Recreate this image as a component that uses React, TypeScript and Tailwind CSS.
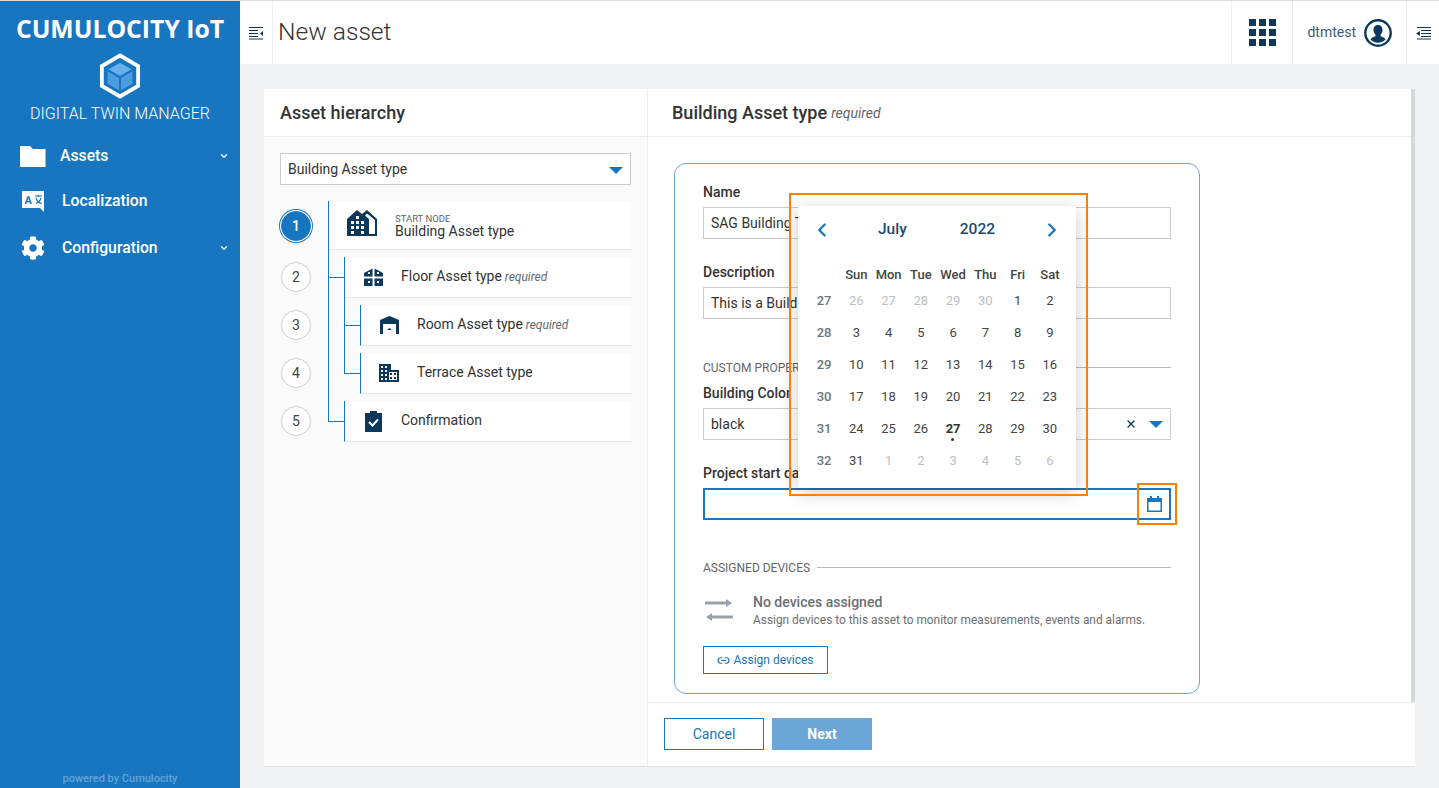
import * as React from 'react'
import { ChevronDown, ChevronLeft, ChevronRight, Link2, X } from 'lucide-react'
import { FaCog } from 'react-icons/fa'

const NAVY = '#0b385b'

const MenuIcon = () => (
  <svg width="15" height="14" viewBox="0 0 15 14">
    <path d="M0 1.500h14M0 4.500h9M0 7.500h9M0 10.500h9M0 13h14" stroke={NAVY} strokeWidth="1" fill="none" />
    <path d="M14 5v5l-3-2.500z" fill={NAVY} />
  </svg>
)

const MenuRightIcon = () => (
  <svg width="15" height="14" viewBox="0 0 15 14">
    <path d="M1 1.500h14M5 4.500h10M5 7.500h10M5 10.500h10M1 13h14" stroke={NAVY} strokeWidth="1" fill="none" />
    <path d="M4 5v5L0 7.500z" fill={NAVY} />
  </svg>
)

const LogoIcon = () => (
  <svg width="42" height="46" viewBox="0 0 44 48">
    <path d="M22 2.500 41 13.500V34.500L22 45.500 3 34.500V13.500z" fill="none" stroke="#fff" strokeWidth="4" />
    <path d="M22 10 34 17 22 24 10 17z" fill="#64aeea" />
    <path d="M9 19 21 26V39L9 32z" fill="#4c9ce0" />
    <path d="M35 19 23 26V39L35 32z" fill="#4c9ce0" />
  </svg>
)

const FolderIcon = () => (
  <svg width="26" height="21" viewBox="0 0 26 21">
    <path d="M0 0h10l3 3h12.500v18H0z" fill="#fff" />
  </svg>
)

const LocalizationIcon = () => (
  <svg width="24" height="23" viewBox="0 0 24 23">
    <path d="M1 1h22v21l-4-4H1z" fill="#fff" />
    <text x="3.500" y="14" fontSize="11" fontWeight="700" fill="#1776bf" fontFamily="Roboto, sans-serif">A</text>
    <path d="M14 6h7M17.500 5v2M15 8c1 3 3 5 6 5.500M20 8c-.6 2.600-2.500 4.400-5 5.500" stroke="#1776bf" strokeWidth="1.200" fill="none" />
  </svg>
)

const BuildingIcon = () => (
  <svg width="31" height="27" viewBox="0 0 31 27" className="mb-[6px]">
    <path d="M0 27V10L10 1l5 4 5-4 10 9v17z" fill={NAVY} />
    <path d="M20 4.500 28 11v14h-6V10l-4-3.500z" fill="#fff" />
    <path d="M24 13h2v2h-2zM24 18h2v2h-2zM4 12h3v3H4zM9 12h3v3H9zM14 12h3v3h-3zM9 7h3v3H9zM4 17h3v3H4zM9 17h3v3H9zM14 17h3v3h-3zM4 22h3v3H4zM14 22h3v3h-3z" fill="#fff" />
  </svg>
)

const FloorIcon = () => (
  <svg width="19" height="18" viewBox="0 0 19 18">
    <path d="M0 18V5l9.500-5L19 5v13z" fill={NAVY} />
    <path d="M8.500 0h2v18h-2zM0 8.500h19v2H0zM4 4h2v2H4zM13 4h2v2h-2zM4 13h2v2H4zM13 13h2v2h-2z" fill="#fff" />
  </svg>
)

const RoomIcon = () => (
  <svg width="19" height="18" viewBox="0 0 19 18">
    <path d="M0 18V4l9.500-4L19 4v14h-3V8H3v10z" fill={NAVY} />
    <path d="M7 14l2.500-2 2.500 2z" fill={NAVY} />
  </svg>
)

const TerraceIcon = () => (
  <svg width="20" height="18" viewBox="0 0 20 18">
    <path d="M0 0h12v6h8v12H0z" fill={NAVY} />
    <path d="M2 2h2v2H2zM6 2h2v2H6zM2 6h2v2H2zM6 6h2v2H6zM2 10h2v2H2zM6 10h2v2H6zM2 14h2v2H2zM6 14h2v2H6zM10 8h8v8h-8z" fill="#fff" />
    <path d="M11 9h2v2h-2zM15 9h2v2h-2zM11 13h2v2h-2zM15 13h2v2h-2z" fill={NAVY} />
  </svg>
)

const ClipboardIcon = () => (
  <svg width="17" height="21" viewBox="0 0 17 21">
    <path d="M0 2h5V0h7v2h5v19H0z" fill={NAVY} />
    <path d="M4 11l3.500 3.500L13 8.500" stroke="#fff" strokeWidth="2" fill="none" />
  </svg>
)

const GridIcon = () => (
  <svg width="27" height="27" viewBox="0 0 27 27" fill={NAVY}>
    <path d="M0 0h7v7H0zM10 0h7v7h-7zM20 0h7v7h-7zM0 10h7v7H0zM10 10h7v7h-7zM20 10h7v7h-7zM0 20h7v7H0zM10 20h7v7h-7zM20 20h7v7h-7z" />
  </svg>
)

const UserIcon = () => (
  <svg width="28" height="28" viewBox="0 0 28 28">
    <circle cx="14" cy="14" r="12.700" fill="none" stroke={NAVY} strokeWidth="2.400" />
    <path d="M14 6c3 0 4.500 2.300 4.500 5 0 2-.8 3.700-2 4.800v1.500c2 .8 4 1.500 5 3.200A10.500 10.500 0 0 1 6.500 20.500c1-1.700 3-2.400 5-3.200v-1.500c-1.200-1.100-2-2.800-2-4.800 0-2.700 1.500-5 4.500-5z" fill={NAVY} />
  </svg>
)

const CalendarIcon = () => (
  <svg width="15" height="16" viewBox="0 0 15 16">
    <path d="M0 2h3V0h2v2h5V0h2v2h3v14H0z" fill="#1776bf" />
    <path d="M1.500 6h12v8.500h-12z" fill="#fff" />
  </svg>
)

const TransferIcon = () => (
  <svg width="30" height="26" viewBox="0 0 30 26" fill="#9aa3ab">
    <path d="M1 3.500h21V1l6 4-6 4V6.500H1zM29 17.500H8V15l-6 4 6 4v-2.500h21z" />
  </svg>
)

const NavItem = ({
  icon,
  label,
  textLeft,
  iconLeft,
  chevron,
  className,
}: {
  icon: React.ReactNode
  label: string
  textLeft: string
  iconLeft: string
  chevron?: boolean
  className?: string
}) => (
  <div className={`flex h-[24px] items-center text-[15.750px] font-medium text-white ${className ?? ''}`}>
    <div className={iconLeft}>{icon}</div>
    <span className={textLeft}>{label}</span>
    {chevron && <ChevronDown size={10} strokeWidth={3} className="ml-auto mr-[11px]" />}
  </div>
)

const Sidebar = () => (
  <aside className="flex h-full w-[240px] shrink-0 flex-col bg-[#1776bf] text-white">
    <div className="mt-[11px] text-center font-['Open_Sans',sans-serif] text-[24.750px] leading-[34px] font-bold whitespace-nowrap">
      CUMULOCITY IoT
    </div>
    <div className="mt-[7px] flex justify-center">
      <LogoIcon />
    </div>
    <div className="mt-[5px] text-center text-[16px] leading-[20px] font-light">DIGITAL TWIN MANAGER</div>
    <NavItem
      className="mt-[20px]"
      icon={<FolderIcon />}
      iconLeft="ml-[20px] flex"
      label="Assets"
      textLeft="ml-[14px]"
      chevron
    />
    <NavItem
      className="mt-[21px]"
      icon={<LocalizationIcon />}
      iconLeft="ml-[21px] flex"
      label="Localization"
      textLeft="ml-[17px]"
    />
    <NavItem
      className="mt-[23px]"
      icon={<FaCog size={24} />}
      iconLeft="ml-[21px] flex"
      label="Configuration"
      textLeft="ml-[17px]"
      chevron
    />
    <div className="mt-auto mb-[2px] text-center text-[11px] leading-[14px] font-medium text-[#63a4d9]">
      powered by Cumulocity
    </div>
  </aside>
)

const Header = () => (
  <header className="flex h-[63px] shrink-0 items-stretch bg-white">
    <div className="flex w-[33px] items-center justify-center border-r border-[#eceef0]">
      <MenuIcon />
    </div>
    <h1 className="ml-[5px] flex items-center text-[24.600px] font-light text-[#333]">New asset</h1>
    <div className="ml-auto flex w-[62px] items-center justify-center border-x border-[#eceef0]">
      <GridIcon />
    </div>
    <div className="flex w-[114px] items-center justify-end gap-[8px] border-r border-[#eceef0] pr-[14px] text-[14px] text-[#3c5a75]">
      dtmtest
      <UserIcon />
    </div>
    <div className="flex w-[32px] items-center justify-center">
      <MenuRightIcon />
    </div>
  </header>
)

const steps = [1, 2, 3, 4, 5]

const TreeRow = ({
  height,
  indent,
  icon,
  iconWidth,
  children,
}: {
  height: string
  indent: string
  icon: React.ReactNode
  iconWidth: string
  children: React.ReactNode
}) => (
  <div className={`flex items-center border-b border-l border-b-[#e4e6e8] border-l-[#1776bf] bg-white ${height} ${indent}`}>
    <div className={`flex shrink-0 justify-center ${iconWidth}`}>{icon}</div>
    <div className="mb-px text-[14px] leading-[15px] whitespace-nowrap text-[#333]">{children}</div>
  </div>
)

const Required = () => <em className="text-[12px] text-[#5f6b73]"> required</em>

const AssetHierarchy = () => (
  <section className="w-[384px] shrink-0 border-r border-[#eceef0] bg-[#fafafa]">
    <div className="flex h-[48px] items-center border-b border-[#eceef0] bg-white px-[16px] text-[18px] font-medium text-[#333]">
      Asset hierarchy
    </div>
    <div className="px-[16px] pt-[16px]">
      <div className="flex h-[32px] items-center justify-between border border-[#c8ccd0] bg-white pr-[7px] pl-[7px] text-[14px] text-[#333]">
        Building Asset type
        <span className="mt-[3px] h-0 w-0 border-x-[7px] border-t-[7px] border-x-transparent border-t-[#1776bf]" />
      </div>
      <div className="relative mt-[16px] flex">
        <div className="flex w-[48px] shrink-0 flex-col">
          {steps.map((step) => (
            <div
              key={step}
              className={`mb-[18px] ml-px flex h-[30px] w-[30px] items-center justify-center rounded-full border text-[14px] ${
                step === 1
                  ? 'mt-[10px] mb-[21px] border-[#1776bf] bg-[#1776bf] font-medium text-white ring-1 ring-[#1776bf] ring-offset-1'
                  : 'border-[#c8ced4] bg-white text-[#444]'
              }`}
            >
              {step}
            </div>
          ))}
        </div>
        <div className="flex flex-1 flex-col gap-[7px]">
          <TreeRow height="h-[49px]" indent="ml-0" icon={<BuildingIcon />} iconWidth="w-[66px]">
            <div className="pt-[4px]">
              <div className="text-[9.500px] leading-[10px] text-[#666]">START NODE</div>
              Building Asset type
            </div>
          </TreeRow>
          <TreeRow height="h-[41px]" indent="ml-[16px]" icon={<FloorIcon />} iconWidth="w-[56px]">
            Floor Asset type
            <Required />
          </TreeRow>
          <TreeRow height="h-[41px]" indent="ml-[32px]" icon={<RoomIcon />} iconWidth="w-[56px]">
            Room Asset type
            <Required />
          </TreeRow>
          <TreeRow height="h-[41px]" indent="ml-[32px]" icon={<TerraceIcon />} iconWidth="w-[56px]">
            Terrace Asset type
          </TreeRow>
          <TreeRow height="h-[41px]" indent="ml-[16px]" icon={<ClipboardIcon />} iconWidth="w-[56px]">
            Confirmation
          </TreeRow>
        </div>
        {/* tree connectors */}
        <div className="absolute top-0 left-[48px] h-[220px] w-px bg-[#1776bf]" />
        <div className="absolute top-[76px] left-[48px] h-px w-[16px] bg-[#1776bf]" />
        <div className="absolute top-[220px] left-[48px] h-px w-[16px] bg-[#1776bf]" />
        <div className="absolute top-[56px] left-[64px] h-[116px] w-px bg-[#1776bf]" />
        <div className="absolute top-[124px] left-[64px] h-px w-[16px] bg-[#1776bf]" />
        <div className="absolute top-[172px] left-[64px] h-px w-[16px] bg-[#1776bf]" />
      </div>
    </div>
  </section>
)

const Label = ({ children, className }: { children: React.ReactNode; className?: string }) => (
  <div className={`h-[15px] text-[14px] leading-[15px] font-medium text-[#333] ${className ?? ''}`}>{children}</div>
)

const TextInput = ({ children, className }: { children?: React.ReactNode; className?: string }) => (
  <div className={`mt-[7px] flex h-[32px] items-center border border-[#c8ccd0] px-[7px] text-[14px] text-[#333] ${className ?? ''}`}>
    {children}
  </div>
)

const SectionTitle = ({ children, className }: { children: string; className?: string }) => (
  <div className={`flex h-[15px] items-center gap-[7px] text-[12px] whitespace-nowrap text-[#666] ${className ?? ''}`}>
    {children}
    <div className="h-px flex-1 bg-[#b4b8bc]" />
  </div>
)

const weeks = [
  { week: 27, days: [26, 27, 28, 29, 30, 1, 2], muted: [0, 1, 2, 3, 4] },
  { week: 28, days: [3, 4, 5, 6, 7, 8, 9], muted: [] },
  { week: 29, days: [10, 11, 12, 13, 14, 15, 16], muted: [] },
  { week: 30, days: [17, 18, 19, 20, 21, 22, 23], muted: [] },
  { week: 31, days: [24, 25, 26, 27, 28, 29, 30], muted: [] },
  { week: 32, days: [31, 1, 2, 3, 4, 5, 6], muted: [1, 2, 3, 4, 5, 6] },
]

const Calendar = () => (
  <div className="absolute top-[42px] left-[123px] h-[282px] w-[278px] bg-white pl-[10px] text-[13px] shadow-[0_4px_18px_rgba(0,0,0,0.2)]">
    <div className="flex h-[47px] items-center text-[15.500px] font-medium text-[#1d4a6e]">
      <ChevronLeft size={22} strokeWidth={2.500} className="ml-[3px] text-[#1776bf]" />
      <span className="ml-[45px]">July</span>
      <span className="ml-[53px]">2022</span>
      <ChevronRight size={22} strokeWidth={2.500} className="ml-[46px] text-[#1776bf]" />
    </div>
    <div className="grid w-[258px] grid-cols-8 pt-[10px] text-center">
      <div />
      {['Sun', 'Mon', 'Tue', 'Wed', 'Thu', 'Fri', 'Sat'].map((day) => (
        <div key={day} className="h-[22px] leading-[24px] font-medium text-[#444]">
          {day}
        </div>
      ))}
      {weeks.map(({ week, days, muted }) => (
        <React.Fragment key={week}>
          <div className="h-[32px] leading-[32px] font-medium text-[#6b7780]">{week}</div>
          {days.map((day, index) => {
            const today = week === 31 && day === 27
            const color = (muted as number[]).includes(index) ? 'text-[#b9bfc5]' : 'text-[#444]'
            return (
              <div key={index} className={`relative h-[32px] leading-[32px] ${today ? 'font-bold text-[#333]' : color}`}>
                {day}
                {today && <span className="absolute top-[25px] left-[14px] h-[3px] w-[3px] rounded-full bg-[#333]" />}
              </div>
            )
          })}
        </React.Fragment>
      ))}
    </div>
  </div>
)

const FormCard = () => (
  <div className="relative ml-[26px] h-[531px] w-[526px] rounded-[12px] border border-[#6aa8dc] bg-white px-[28px] pt-[21px]">
    <Label>Name</Label>
    <TextInput>SAG Building Type</TextInput>
    <Label className="mt-[26px]">Description</Label>
    <TextInput>This is a Building</TextInput>
    <SectionTitle className="mt-[41px]">CUSTOM PROPERTIES</SectionTitle>
    <Label className="mt-[11px]">Building Color</Label>
    <TextInput className="justify-between">
      black
      <span className="flex items-center gap-[12px] pr-0">
        <X size={12} strokeWidth={2.500} className="text-[#0b385b]" />
        <span className="h-0 w-0 border-x-[7px] border-t-[7px] border-x-transparent border-t-[#1776bf]" />
      </span>
    </TextInput>
    <Label className="mt-[26px]">Project start date</Label>
    <div className="mt-[7px] flex h-[32px] items-center justify-end border-2 border-[#1776bf] pr-[7px]">
      <CalendarIcon />
    </div>
    <SectionTitle className="mt-[40px]">ASSIGNED DEVICES</SectionTitle>
    <div className="mt-[20px] flex">
      <div className="mt-[3px] ml-[1px] w-[49px]">
        <TransferIcon />
      </div>
      <div>
        <div className="h-[15px] text-[14px] leading-[15px] font-medium text-[#6b6f73]">No devices assigned</div>
        <div className="mt-[3px] text-[11.880px] leading-[14px] text-[#6b6f73]">
          Assign devices to this asset to monitor measurements, events and alarms.
        </div>
      </div>
    </div>
    <div className="mt-[19px] flex h-[28px] w-[125px] items-center justify-center gap-[3px] border border-[#1776bf] text-[12px] text-[#1776bf]">
      <Link2 size={13} />
      Assign devices
    </div>
    <Calendar />
    {/* orange annotations from the original screenshot */}
    <div className="pointer-events-none absolute top-[29px] left-[114px] h-[303px] w-[299px] border-2 border-[#ff8000]" />
    <div className="pointer-events-none absolute top-[319px] left-[462px] h-[42px] w-[40px] border-2 border-[#ff8000]" />
  </div>
)

const AssetForm = () => (
  <section className="relative flex min-w-0 flex-1 flex-col bg-white">
    <div className="flex h-[48px] shrink-0 items-center border-b border-[#eceef0] pl-[24px] text-[18px] font-medium text-[#333]">
      Building Asset type
      <em className="mt-[2px] ml-[4px] text-[14px] font-normal text-[#666]">required</em>
    </div>
    <div className="flex-1 pt-[26px]">
      <FormCard />
    </div>
    <div className="flex h-[64px] shrink-0 items-center gap-[8px] border-t border-[#eceef0] pb-px pl-[16px] text-[14px]">
      <div className="flex h-[32px] w-[100px] items-center justify-center border border-[#1776bf] text-[#1776bf]">Cancel</div>
      <div className="flex h-[32px] w-[100px] items-center justify-center bg-[#6aa6d8] font-bold text-white">Next</div>
    </div>
    {/* scrollbar */}
    <div className="absolute top-0 right-0 h-[613px] w-[4px] bg-[#d6d8db]" />
  </section>
)

export default function App() {
  return (
    <div className="flex h-[788px] w-[1439px] overflow-hidden border-t border-[#dddddd] bg-[#f1f2f4] font-[Roboto,sans-serif]">
      <Sidebar />
      <div className="flex min-w-0 flex-1 flex-col">
        <Header />
        <main className="flex-1 pt-[25px] pr-[24px] pb-[21px] pl-[24px]">
          <div className="flex h-[678px] border-b border-[#dfe1e3]">
            <AssetHierarchy />
            <AssetForm />
          </div>
        </main>
      </div>
    </div>
  )
}
